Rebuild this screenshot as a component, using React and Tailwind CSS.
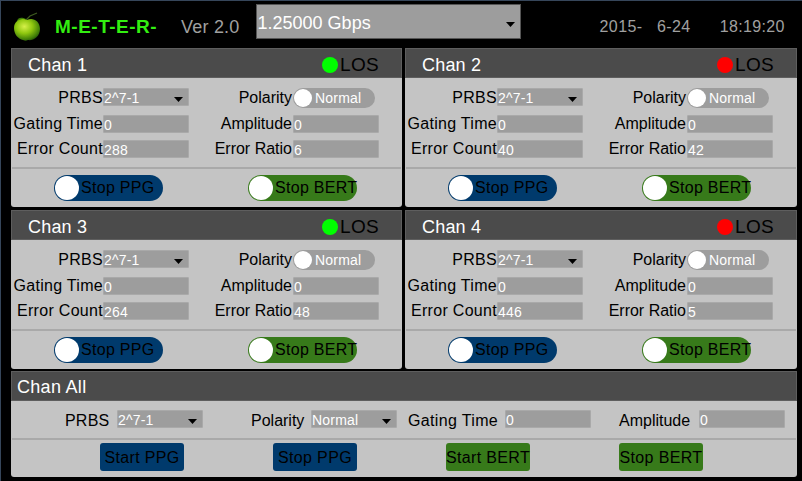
const font = { fontFamily: '"Liberation Sans", Arial, sans-serif' };

function Caret() {
  return (
    <svg width="9" height="5" viewBox="0 0 10 6" preserveAspectRatio="none" className="mt-[3px] shrink-0">
      <path d="M0 0H10L5 6Z" fill="#000" />
    </svg>
  );
}

function Apple() {
  return (
    <svg width="28" height="32" viewBox="0 0 28 32" className="shrink-0">
      <defs>
        <radialGradient id="ap" cx="40%" cy="35%" r="70%">
          <stop offset="0%" stopColor="#d6f04a" />
          <stop offset="45%" stopColor="#8fc70f" />
          <stop offset="85%" stopColor="#3f7d08" />
          <stop offset="100%" stopColor="#1f4a06" />
        </radialGradient>
      </defs>
      <path d="M13 10 L17 6 L24 3" stroke="#3d5a20" strokeWidth="1.2" fill="none" />
      <path d="M13 9 C9 7 5 7 4 11 C8 13 11 12 13 9Z" fill="#3f7d08" />
      <path d="M14 10 C19 7 27 10 27 19 C27 27 20 31 15 30 C13 31 12 31 10 30 C5 29 1 24 1 18 C1 11 8 7 14 10Z" fill="url(#ap)" />
    </svg>
  );
}

function Field({ value, select }) {
  return (
    <div className="flex h-[18px] w-[86px] items-center justify-between rounded-[1px] border border-[#a9a9a9] bg-[#9d9d9d] pr-[5px] pt-[2px] text-[14px] leading-none tracking-[0.2px] text-white">
      <span>{value}</span>
      {select && <Caret />}
    </div>
  );
}

function LeftLabel({ children, first }) {
  return <div className={`${first ? "mt-[2px]" : "mt-px"} whitespace-nowrap text-right text-[16px] leading-none tracking-[0.3px] text-black`}>{children}</div>;
}

function RightLabel({ children, first }) {
  return <div className={`${first ? "mt-[2px]" : "mt-px"} whitespace-nowrap pr-px text-right text-[16px] leading-none text-black`}>{children}</div>;
}

function Toggle({ label, color }) {
  return (
    <div className={`flex h-[26px] w-[109px] items-center rounded-full ${color}`}>
      <div className="ml-px h-[24px] w-[24px] shrink-0 rounded-full bg-white" />
      <span className="ml-[2px] whitespace-nowrap text-[16px] leading-none tracking-[0.3px] text-black">{label}</span>
    </div>
  );
}

function Chan({ name, los, err, ratio }) {
  return (
    <section className="h-[159px] rounded-b-[3px] bg-[#c4c4c4]">
      <header className="flex h-[30px] items-center justify-between border border-[#5e5e5e] bg-[#4b4b4b] pl-[16px] pr-[22px] pt-[3px]">
        <span className="text-[18px] leading-none tracking-[0.2px] text-white">{name}</span>
        <span className="flex items-center">
          <span className={`mr-[2px] h-[16px] w-[16px] rounded-full ${los}`} />
          <span className="text-[19px] leading-none tracking-[0.3px] text-black">LOS</span>
        </span>
      </header>
      <div className="grid h-[89px] grid-cols-[92px_86px_104px_86px] grid-rows-[27px_25px_18px] items-start pt-[10px]">
        <LeftLabel first>PRBS</LeftLabel>
        <Field value="2^7-1" select />
        <RightLabel first>Polarity</RightLabel>
        <div className="flex h-[20px] w-[82px] items-center rounded-full bg-[#9d9d9d]">
          <div className="ml-[1px] h-[18px] w-[18px] shrink-0 rounded-full bg-white" />
          <span className="ml-[3px] text-[14px] leading-none tracking-[0.2px] text-white">Normal</span>
        </div>
        <LeftLabel>Gating Time</LeftLabel>
        <Field value="0" />
        <RightLabel>Amplitude</RightLabel>
        <Field value="0" />
        <LeftLabel>Error Count</LeftLabel>
        <Field value={err} />
        <RightLabel>Error Ratio</RightLabel>
        <Field value={ratio} />
      </div>
      <div className="mx-px h-[2px] bg-[#a9a9a9]" />
      <div className="flex gap-[85px] pl-[43px] pt-[6px]">
        <Toggle label="Stop PPG" color="bg-[#003a6c]" />
        <Toggle label="Stop BERT" color="bg-[#377a1a]" />
      </div>
    </section>
  );
}

function AllButton({ label, color }) {
  return (
    <div className={`flex h-[28px] w-[84px] items-center justify-center whitespace-nowrap rounded-[3px] pt-[1px] text-[16px] leading-none tracking-[0.35px] text-black ${color}`}>
      {label}
    </div>
  );
}

export default function App() {
  return (
    <div style={font} className="h-[481px] w-[802px] overflow-hidden border-l border-t border-[#36465a] bg-black">
      <div className="flex h-[47px] items-center">
        <div className="ml-[12px] mt-[3px]"><Apple /></div>
        <span className="ml-[14px] mt-[4px] whitespace-nowrap text-[19px] font-bold leading-none tracking-[0.5px] text-[#33ee11]">M-E-T-E-R-</span>
        <span className="ml-[24px] mt-[4px] whitespace-nowrap text-[18px] leading-none tracking-[0.2px] text-[#a0a0a0]">Ver 2.0</span>
        <div className="ml-[16px] mb-[7px] flex h-[35px] w-[265px] items-center justify-between border border-[#555] bg-[#9d9d9d] pl-[1px] pr-[5px] pt-[4px] text-[18px] leading-none text-white">
          <span>1.25000 Gbps</span>
          <Caret />
        </div>
        <span className="ml-[79px] mt-[5px] whitespace-pre text-[16px] leading-none tracking-[0.4px] text-[#a0a0a0]">2015-   6-24</span>
        <span className="ml-[29px] mt-[5px] text-[16px] leading-none tracking-[0.35px] text-[#a0a0a0]">18:19:20</span>
      </div>
      <div className="ml-[10px] grid w-[786px] grid-cols-[391px_392px] gap-x-[3px] gap-y-[3px]">
        <Chan name="Chan 1" los="bg-[#00ff00]" err="288" ratio="6" />
        <Chan name="Chan 2" los="bg-[#ff0000]" err="40" ratio="42" />
        <Chan name="Chan 3" los="bg-[#00ff00]" err="264" ratio="48" />
        <Chan name="Chan 4" los="bg-[#ff0000]" err="446" ratio="5" />
      </div>
      <section className="ml-[10px] mt-[2px] h-[106px] w-[786px] rounded-b-[3px] bg-[#c4c4c4]">
        <header className="flex h-[30px] items-center border border-[#5e5e5e] bg-[#4b4b4b] pl-[5px] pt-[2px]">
          <span className="text-[18px] leading-none tracking-[0.3px] text-white">Chan All</span>
        </header>
        <div className="flex h-[37px] items-center pb-[1px] text-[16px] leading-none text-black">
          <span className="ml-[54px] mt-[4px] w-[43px] tracking-[0.2px]">PRBS</span>
          <div className="ml-[9px]"><Field value="2^7-1" select /></div>
          <span className="ml-[48px] mt-[4px] w-[51px]">Polarity</span>
          <div className="ml-[9px]"><Field value="Normal" select /></div>
          <span className="ml-[11px] mt-[4px] w-[89px] whitespace-nowrap tracking-[0.35px]">Gating Time</span>
          <div className="ml-[8px]"><Field value="0" /></div>
          <span className="ml-[28px] mt-[4px] w-[72px]">Amplitude</span>
          <div className="ml-[8px]"><Field value="0" /></div>
        </div>
        <div className="mx-px h-[2px] bg-[#a9a9a9]" />
        <div className="flex gap-[89px] pl-[89px] pt-[3px]">
          <AllButton label="Start PPG" color="bg-[#003a6c]" />
          <AllButton label="Stop PPG" color="bg-[#003a6c]" />
          <AllButton label="Start BERT" color="bg-[#377a1a]" />
          <AllButton label="Stop BERT" color="bg-[#377a1a]" />
        </div>
      </section>
    </div>
  );
}
